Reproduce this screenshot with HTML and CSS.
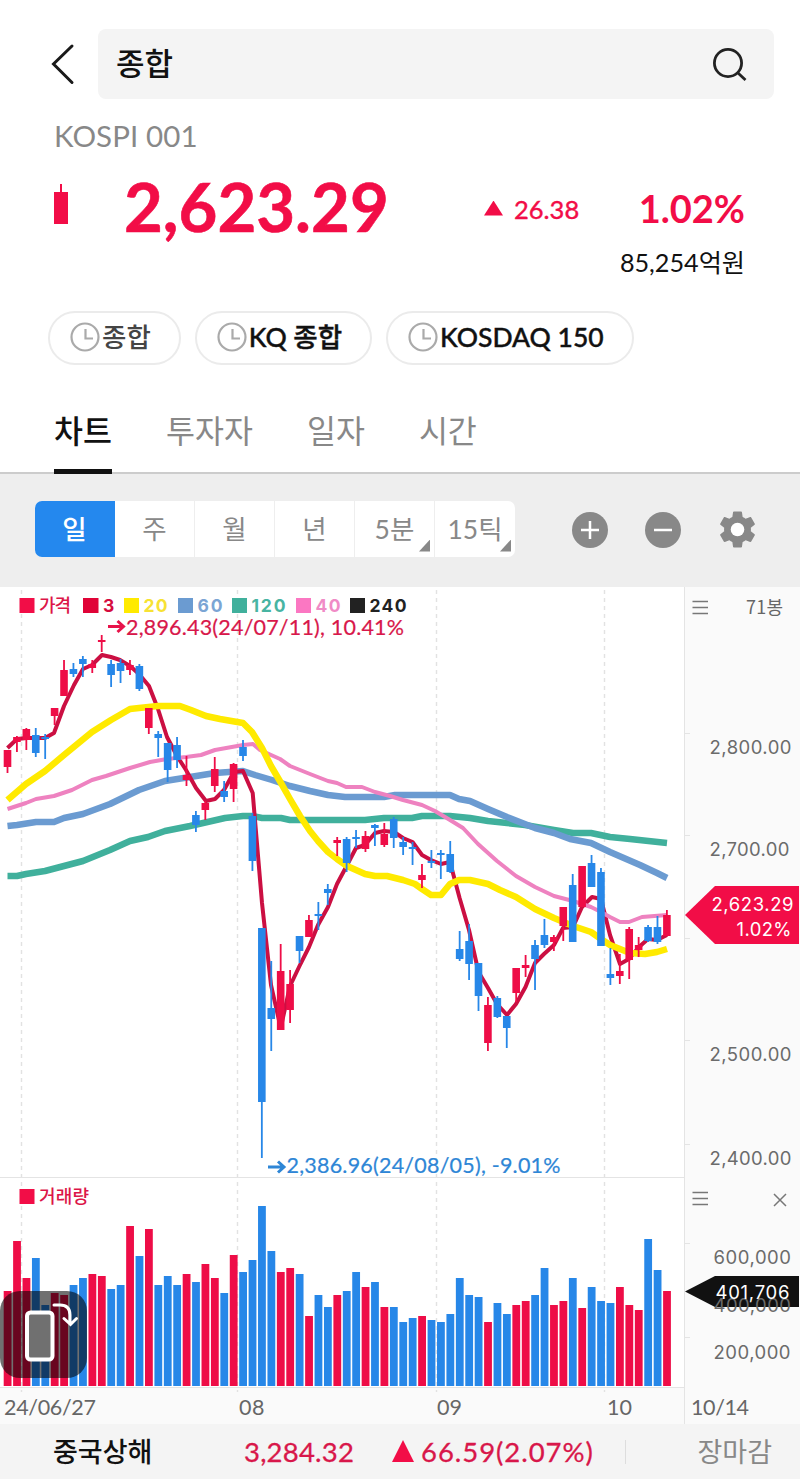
FILE: index.html
```html
<!DOCTYPE html>
<html lang="ko">

<head>
    <meta charset="UTF-8">
    <meta name="viewport" content="width=device-width, initial-scale=1.0">
    <title>종합 - KOSPI</title>
    <link rel="stylesheet" href="styles.css">
</head>

<body>

    <header class="top-bar">
        <svg class="back" width="26" height="42" viewBox="0 0 26 42">
            <path d="M22 3 3.500 21 22 39.500" />
        </svg>
        <div class="search-box">
            <span>종합</span>
            <svg width="36" height="36" viewBox="0 0 36 36">
                <circle cx="16" cy="17" r="13.600" />
                <path d="M25.500 26.500 33.500 34" />
            </svg>
        </div>
    </header>

    <section class="quote">
        <div class="quote-code">KOSPI 001</div>
        <div class="quote-row">
            <svg class="mini-candle" width="14" height="40" viewBox="0 0 14 40">
                <rect x="6" width="2" height="9" />
                <rect y="8" width="14" height="32" />
            </svg>
            <span class="price">2,623.29</span>
            <span class="diff"><i class="up"></i>26.38</span>
            <span class="rate">1.02%</span>
        </div>
        <div class="amount">85,254억원</div>
    </section>

    <div class="chips">
        <div class="chip chip-on">
            <svg width="30" height="30" viewBox="0 0 30 30"><circle cx="15" cy="15" r="13.500" /><path d="M15.500 7v9.500H23" /></svg>
            <span>종합</span>
        </div>
        <div class="chip">
            <svg width="30" height="30" viewBox="0 0 30 30"><circle cx="15" cy="15" r="13.500" /><path d="M15.500 7v9.500H23" /></svg>
            <span>KQ 종합</span>
        </div>
        <div class="chip">
            <svg width="30" height="30" viewBox="0 0 30 30"><circle cx="15" cy="15" r="13.500" /><path d="M15.500 7v9.500H23" /></svg>
            <span>KOSDAQ 150</span>
        </div>
    </div>

    <nav class="tabs">
        <a class="tab active">차트</a>
        <a class="tab">투자자</a>
        <a class="tab">일자</a>
        <a class="tab">시간</a>
    </nav>

    <div class="toolbar">
        <div class="periods">
            <div class="period selected">일</div>
            <div class="period">주</div>
            <div class="period">월</div>
            <div class="period">년</div>
            <div class="period more">5분</div>
            <div class="period more">15틱</div>
        </div>
        <div class="tools">
            <svg width="36" height="36" viewBox="0 0 36 36">
                <circle cx="18" cy="18" r="18" />
                <path d="M9 18h18M18 9v18" />
            </svg>
            <svg width="36" height="36" viewBox="0 0 36 36">
                <circle cx="18" cy="18" r="18" />
                <path d="M9 18h18" />
            </svg>
            <svg class="gear" width="43" height="43" viewBox="0 0 24 24">
                <path d="M19.430 12.980c.040-.320.070-.640.070-.980s-.030-.660-.070-.980l2.110-1.650c.190-.150.240-.420.120-.640l-2-3.460c-.120-.220-.390-.300-.610-.220l-2.490 1c-.520-.400-1.080-.730-1.690-.980l-.380-2.650C14.460 2.180 14.250 2 14 2h-4c-.250 0-.460.180-.490.420l-.380 2.650c-.610.250-1.170.590-1.690.980l-2.490-1c-.230-.090-.490 0-.610.220l-2 3.460c-.130.220-.070.490.120.640l2.110 1.650c-.040.320-.070.650-.070.980s.030.660.070.980l-2.110 1.650c-.190.150-.240.420-.120.640l2 3.460c.120.220.390.300.610.220l2.490-1c.520.400 1.080.730 1.690.980l.380 2.650c.030.240.240.420.490.420h4c.250 0 .460-.180.490-.420l.380-2.650c.610-.250 1.170-.590 1.690-.980l2.490 1c.230.090.490 0 .610-.220l2-3.460c.120-.220.070-.490-.120-.640l-2.110-1.650z" />
                <circle cx="12" cy="12" r="3.800" />
            </svg>
        </div>
    </div>

    <main class="chart-wrap">
        <svg id="chart" class="chart" width="800" height="837" viewBox="0 587 800 837">
            <!-- backgrounds and grid -->
            <rect class="axis-bg" x="684" y="587" width="116" height="837" />
            <rect class="axis-bg" x="0" y="1387" width="800" height="37" />
            <path class="grid" d="M21.500 590V1392M237.500 590V1392M436.500 590V1392M604.500 590V1392" />
            <path class="rule" d="M684.500 587V1424M0 1177.500H684M0 1387.500H684M684 733.500h6M684 835.500h6M684 938.500h6M684 1040.500h6M684 1144.500h6M684 1243.500h6M684 1337.500h6" />

            <!-- moving averages -->
            <g id="lines"></g>
            <g id="candles"></g>
            <g id="volumes"></g>

            <!-- legend -->
            <g class="legend">
                <rect x="19.500" y="598" width="15" height="15" fill="#f20d47" />
                <text class="kr" x="39" y="611.500" textLength="32" fill="#dc1548">가격</text>
                <rect x="83" y="598" width="15.500" height="15" fill="#e00337" />
                <text x="103" y="611.500" textLength="12" fill="#d50b3e">3</text>
                <rect x="124" y="598" width="15" height="15" fill="#ffea00" />
                <text x="143.500" y="611.500" textLength="24" fill="#f7e233">20</text>
                <rect x="178" y="598" width="15" height="15" fill="#6b9bd1" />
                <text x="197.500" y="611.500" textLength="25" fill="#7ba5d4">60</text>
                <rect x="232" y="598" width="15" height="15" fill="#40b09c" />
                <text x="251.500" y="611.500" textLength="34" fill="#48b4a2">120</text>
                <rect x="296" y="598" width="15" height="15" fill="#fb77c2" />
                <text x="315.500" y="611.500" textLength="25" fill="#f08bc6">40</text>
                <rect x="350" y="598" width="15" height="15" fill="#222" />
                <text x="369.500" y="611.500" textLength="37" fill="#222">240</text>
                <rect x="19.500" y="1189" width="15" height="15" fill="#f20d47" />
                <text class="kr" x="39" y="1202.500" textLength="50" fill="#dc1548">거래량</text>
            </g>

            <!-- high / low marks -->
            <path class="arrow-high" d="M108 626.500h14M117.500 621l6 5.500-6 5.500" />
            <text class="mark high" x="126" y="634.500" textLength="278">2,896.43(24/07/11), 10.41%</text>
            <path class="arrow-low" d="M268 1167h14M278 1161.500l6 5.500-6 5.500" />
            <text class="mark low" x="286.500" y="1173" textLength="274">2,386.96(24/08/05), -9.01%</text>

            <!-- price axis -->
            <path class="menu" d="M692.500 601.500h15.500M692.500 607.500h15.500M692.500 613.500h15.500" />
            <text class="count" x="746" y="614" textLength="37">71봉</text>
            <g class="axis">
                <text x="709.500" y="753.500" textLength="82">2,800.00</text>
                <text x="709.500" y="855.500" textLength="80">2,700.00</text>
                <text x="709.500" y="1060.500" textLength="82">2,500.00</text>
                <text x="709.500" y="1165" textLength="82">2,400.00</text>
            </g>
            <path class="tag-red" d="M685 915l30-29h84v58h-84z" />
            <g class="tag-text">
                <text x="711.500" y="911" textLength="82">2,623.29</text>
                <text x="736.500" y="936" textLength="55">1.02%</text>
            </g>

            <!-- volume axis -->
            <path class="menu" d="M692.500 1192.500h15.500M692.500 1198.500h15.500M692.500 1204.500h15.500M774 1194l12 12M786 1194l-12 12" />
            <path class="tag-black" d="M685 1291.500l30-15.500h84v31h-84z" />
            <g class="axis">
                <text x="713.500" y="1263.500" textLength="77.500">600,000</text>
                <text x="713.500" y="1311.500" textLength="77.500">400,000</text>
                <text x="713.500" y="1358.500" textLength="77">200,000</text>
            </g>
            <text class="tag-text" x="715.500" y="1298.500" textLength="74">401,706</text>

            <!-- dates -->
            <g class="dates">
                <text x="4" y="1415" textLength="92">24/06/27</text>
                <text x="239" y="1415" textLength="25.500">08</text>
                <text x="437" y="1415" textLength="25">09</text>
                <text x="607" y="1415" textLength="25">10</text>
                <text x="691" y="1415" textLength="58">10/14</text>
            </g>
        </svg>

        <button class="rotate" type="button">
            <svg width="87" height="87" viewBox="0 0 87 87">
                <rect x="27" y="21.500" width="25.500" height="47" rx="3.500" />
                <path d="M54 14h6q10 0 10 10v9M64 27.500l6.500 6 6-6" />
            </svg>
        </button>
    </main>

    <footer class="ticker">
        <span class="ticker-name">중국상해</span>
        <span class="ticker-price">3,284.32</span>
        <span class="ticker-diff"><i class="up"></i>66.59(2.07%)</span>
        <span class="ticker-state">장마감</span>
    </footer>

    <script src="chart.js"></script>

</body>

</html>
```
FILE: styles.css
```css
body {
    font-family: Lato, "Noto Sans CJK KR", sans-serif;
    background-color: #fff;
    color: #111;
    margin: 0;
    width: 800px;
}

svg {
    display: block;
}

/* search */
.top-bar {
    display: flex;
    align-items: center;
    padding: 29px 26px 0 50px;
}

.back {
    margin-right: 22px;
    fill: none;
    stroke: #1a1a1a;
    stroke-width: 3;
    stroke-linecap: round;
}

.search-box {
    flex: 1;
    display: flex;
    align-items: center;
    justify-content: space-between;
    box-sizing: border-box;
    height: 70px;
    padding: 0 26px 0 18px;
    background-color: #f4f4f4;
    border-radius: 8px;
    font-family: "Noto Sans CJK KR", sans-serif;
    font-size: 31px;
    font-weight: 500;
}

.search-box span {
    line-height: 66px;
    padding-bottom: 4px;
}

.search-box svg {
    fill: none;
    stroke: #222;
    stroke-width: 2.8;
}

/* quote */
.quote {
    padding: 0 55px 0 54px;
    height: 212px;
}

.quote-code {
    padding-top: 17px;
    line-height: 40px;
    font-size: 29.5px;
    letter-spacing: .1px;
    color: #888;
}

.quote-row {
    display: flex;
    align-items: center;
    height: 96px;
    color: #f20d47;
}

.mini-candle {
    fill: #f20d47;
}

.price {
    width: 360px;
    margin-left: 56px;
    padding-top: 4px;
    font-size: 67px;
    font-weight: 700;
    line-height: 92px;
    -webkit-text-stroke: .6px #f20d47;
}

.up {
    display: inline-block;
    width: 19px;
    height: 15px;
    margin-right: 11px;
    background-color: #f20d47;
    clip-path: polygon(50% 0, 100% 100%, 0 100%);
}

.diff {
    flex: 1;
    padding-top: 9px;
    font-size: 25.5px;
    -webkit-text-stroke: .4px #f20d47;
}

.diff .up {
    position: relative;
    top: -3px;
}

.rate {
    padding-top: 8px;
    font-size: 38px;
    font-weight: 700;
}

.amount {
    margin-top: -7px;
    line-height: 34px;
    font-size: 25.2px;
    text-align: right;
}

/* recent items */
.chips {
    display: flex;
    gap: 14px;
    padding-left: 48px;
}

.chip {
    display: flex;
    align-items: center;
    box-sizing: border-box;
    height: 54px;
    padding: 0 28px 0 20px;
    border: 2px solid #ebebeb;
    border-radius: 27px;
    font-size: 26.5px;
    font-weight: 500;
    white-space: nowrap;
}

.chip span {
    margin-left: 2px;
    padding-bottom: 2px;
    line-height: 46px;
    -webkit-text-stroke: .4px #111;
}

.chip.chip-on span {
    color: #444;
    -webkit-text-stroke: 0;
}

.chip svg {
    margin-top: -2px;
    fill: none;
    stroke: #aaa;
    stroke-width: 2.2;
}

/* tabs */
.tabs {
    display: flex;
    gap: 54px;
    height: 80px;
    margin-top: 27px;
    padding-left: 54px;
    border-bottom: 2px solid #ccc;
    font-family: "Noto Sans CJK KR", sans-serif;
}

.tab {
    height: 77px;
    border-bottom: 5px solid transparent;
    font-size: 31.5px;
    line-height: 75px;
    color: #888;
}

.tab.active {
    color: #111;
    font-weight: 500;
    border-color: #111;
}

/* chart toolbar */
.toolbar {
    display: flex;
    align-items: center;
    justify-content: space-between;
    box-sizing: border-box;
    height: 113px;
    padding: 0 43px 2px 35px;
    background-color: #eee;
}

.periods {
    display: flex;
    height: 56px;
    margin-top: -2px;
    border-radius: 7px;
    overflow: hidden;
    background-color: #fff;
}

.period {
    position: relative;
    box-sizing: border-box;
    width: 80px;
    border-right: 1px solid #eee;
    font-size: 26.5px;
    line-height: 57px;
    text-align: center;
    color: #888;
}

.period:last-child {
    border-right: 0;
}

.selected {
    background-color: #2488ee;
    border-color: #2488ee;
    color: #fff;
    font-weight: 500;
}

.more::after {
    content: "";
    position: absolute;
    right: 4px;
    bottom: 5px;
    width: 11px;
    height: 12px;
    background-color: #888;
    clip-path: polygon(100% 0, 100% 100%, 0 100%);
}

.tools {
    display: flex;
    align-items: center;
    gap: 37px;
    fill: #888;
}

.tools path {
    stroke: #fff;
    stroke-width: 2.5;
}

.tools .gear {
    margin: 0 -2px 0 -2px;
}

.gear path {
    stroke: none;
}

.gear circle {
    fill: #fff;
}

/* chart */
.chart-wrap {
    position: relative;
    height: 837px;
}

.axis-bg {
    fill: #fafafa;
}

.grid {
    stroke: #e2e2e2;
    stroke-width: 1.4;
    stroke-dasharray: 4 4;
}

.rule {
    stroke: #e4e4e4;
    fill: none;
}

.legend text {
    font: 700 17.5px Inter, sans-serif;
}

.legend .kr {
    font: 500 18px "Noto Sans CJK KR", sans-serif;
}

.mark {
    font: 21.5px Lato, sans-serif;
    stroke-width: .2;
}

.high {
    fill: #d8174a;
    stroke: #d8174a;
}

.low {
    fill: #2e86d6;
    stroke: #2e86d6;
}

.arrow-high,
.arrow-low {
    fill: none;
    stroke: #e8134a;
    stroke-width: 3;
}

.arrow-low {
    stroke: #2e86d6;
}

.menu {
    stroke: #777;
    stroke-width: 1.5;
}

.count {
    font: 18px "Noto Sans CJK KR", sans-serif;
    fill: #666;
}

.axis text {
    font: 18.5px Inter, sans-serif;
    fill: #6b6b6b;
}

.tag-red {
    fill: #f20d47;
}

.tag-black {
    fill: #111;
}

.tag-text {
    font: 18.5px Inter, sans-serif;
    fill: #fff;
}

.dates {
    font: 21.5px Lato, sans-serif;
    fill: #666;
}

.rotate {
    position: absolute;
    left: 0;
    top: 704px;
    width: 87px;
    height: 87px;
    padding: 0;
    border: 0;
    border-radius: 20px;
    background-color: rgba(0, 0, 0, .56);
}

.rotate svg {
    fill: none;
    stroke: #fff;
    stroke-width: 3;
    stroke-linecap: round;
}

.rotate rect {
    fill: #707070;
    stroke-width: 4;
}

/* bottom ticker */
.ticker {
    display: flex;
    align-items: center;
    height: 55px;
    padding: 0 28px 0 53px;
    background-color: #f4f4f4;
    font-size: 27px;
    line-height: 55px;
}

.ticker-name {
    width: 191px;
    font-weight: 500;
}

.ticker-price,
.ticker-diff {
    font-size: 27.5px;
    color: #d8174a;
    letter-spacing: .2px;
    -webkit-text-stroke: .3px #d8174a;
}

.ticker-price {
    width: 148px;
}

.ticker-diff {
    letter-spacing: .95px;
}

.ticker-diff .up {
    width: 22px;
    height: 22px;
    margin-right: 7px;
}

.ticker-state {
    margin-left: auto;
    padding-left: 71px;
    color: #888;
    line-height: 24px;
    border-left: 1px solid #ddd;
}
```
FILE: chart.js
```js
// color, wick top, body top, body bottom, wick bottom, volume top
const bars = [
    ['r', 750, 750, 767, 773, 1291], ['r', 736, 737, 742, 752, 1241], ['r', 728, 729, 740, 750, 1278],
    ['b', 728, 735, 753, 757, 1258], ['b', 734, 737, 739, 759, 1305], ['r', 708, 708, 716, 725, 1293],
    ['r', 660, 670, 696, 696, 1295], ['b', 663, 669, 674, 677, 1285], ['b', 656, 659, 664, 677, 1278],
    ['r', 660, 664, 668, 673, 1274], ['r', 635, 640, 642, 652, 1276], ['b', 660, 664, 675, 687, 1289],
    ['b', 659, 663, 671, 683, 1285], ['r', 660, 665, 670, 675, 1226], ['b', 664, 666, 689, 691, 1256],
    ['r', 708, 708, 728, 734, 1229], ['b', 731, 734, 738, 757, 1285], ['b', 743, 743, 770, 782, 1276],
    ['b', 737, 745, 760, 768, 1285], ['r', 756, 775, 780, 786, 1274], ['b', 811, 815, 825, 832, 1282],
    ['r', 801, 803, 810, 820, 1264], ['r', 757, 769, 786, 792, 1278], ['b', 781, 791, 797, 802, 1293],
    ['r', 763, 764, 789, 802, 1255], ['b', 740, 747, 756, 761, 1272], ['b', 813, 816, 861, 871, 1260],
    ['b', 928, 928, 1102, 1158, 1206], ['b', 961, 1008, 1019, 1051, 1251], ['r', 944, 971, 1030, 1030, 1272],
    ['r', 970, 984, 1010, 1023, 1268], ['b', 936, 936, 951, 963, 1274], ['r', 915, 920, 937, 937, 1316],
    ['b', 902, 914, 916, 930, 1295], ['b', 884, 889, 893, 905, 1307], ['r', 837, 840, 843, 856, 1295],
    ['b', 837, 839, 863, 872, 1291], ['b', 830, 837, 839, 848, 1272], ['r', 831, 836, 849, 852, 1287],
    ['b', 824, 825, 828, 846, 1282], ['r', 823, 834, 845, 847, 1307], ['b', 817, 819, 838, 848, 1307],
    ['b', 837, 842, 847, 855, 1322], ['b', 842, 847, 849, 865, 1318], ['r', 864, 875, 880, 888, 1316],
    ['b', 850, 861, 863, 868, 1320], ['b', 850, 853, 855, 879, 1322], ['b', 841, 854, 872, 873, 1314],
    ['b', 931, 949, 959, 961, 1278], ['b', 924, 941, 964, 980, 1295], ['b', 963, 963, 996, 1011, 1297],
    ['r', 997, 1005, 1043, 1051, 1322], ['b', 996, 998, 1017, 1018, 1303], ['b', 1016, 1016, 1028, 1048, 1314],
    ['r', 968, 968, 993, 1002, 1305], ['r', 955, 965, 968, 977, 1301], ['b', 940, 945, 959, 990, 1295],
    ['b', 919, 935, 945, 948, 1268], ['r', 935, 937, 942, 951, 1305], ['r', 907, 907, 926, 941, 1301],
    ['b', 874, 885, 942, 942, 1278], ['r', 866, 866, 907, 907, 1308], ['b', 855, 863, 887, 887, 1287],
    ['b', 868, 872, 946, 946, 1301], ['b', 948, 974, 978, 985, 1303], ['r', 954, 971, 976, 984, 1287],
    ['r', 927, 929, 960, 979, 1305], ['r', 937, 945, 950, 957, 1310], ['b', 925, 927, 941, 942, 1239],
    ['b', 916, 927, 942, 944, 1270], ['r', 910, 915, 936, 936, 1291]
];

const colors = { r: '#ee0d47', b: '#2787e8' };

const lines = [
    // 120
    ['#40b09c', 6.5, '7.5,876 17,876 26,874 45,871 64,866 83,861 110,850 130,841 148,837 165,831 190,826 225,818 243,816 253,816 262,818 281,818 290,820 365,820 384,818 412,818 422,816 450,816 470,818 488,821 507,823 525,825 554,830 573,833 591,833 610,837 630,839 667,843'],
    // 60
    ['#6b9bd1', 6.5, '7.5,826 17,825 36,822 54,822 64,818 83,814 110,804 139,790 165,781 190,777 215,773 243,771 255,775 272,780 290,786 310,791 328,795 345,797 384,797 395,795 450,795 459,799 470,801 488,809 507,817 535,828 554,833 570,839 591,843 610,852 640,865 657,873 667,878'],
    // 3
    ['#cb0f42', 4, '7.5,748 17,739 27,738 36,738 45,738 54,733 64,706 74,685 83,669 92,665 102,655 111,657 120,660 130,666 139,674 149,686 158,709 167,737 177,756 186,770 196,788 206,801 215,799 224,790 234,772 243,771 252.7,793 262,903 271,985 280.7,1028 290,986 299.5,966 309,947 318,925 328,907 337,884 346.6,866 356,848 365,845 375,833 384,831 394,832 403,838 412.5,842 422,855 431,860 441,864 450,862 459.6,898 469,930 478.5,972 488,988 497,1004 507,1015 516,1004 525.5,987 535,963 544,954 554,945 563,928 573,927 582,907 592,897 601,899 610,935 620,964 629,959 639,947 648,939 657,940 667,935'],
    // 40
    ['#ee82c0', 4, '7.5,809 26,803 36,799 54,796 72,790 92,780 106,776 130,768 150,762 167,759 186,757 201,755 215,750 243,745 253,744 260,750 280,759 290,766 310,774 328,781 337,783 346,787 362,787 375,792 390,796 403,800 422,805 435,811 450,820 463,828 478,844 497,861 516,876 535,887 554,896 573,901 591,907 601,912 610,917 620,922 629,922 642,917 667,915'],
    // 20
    ['#ffea00', 6.5, '7.5,800 26,784 45,771 64,755 92,732 111,720 130,709 139,708 158,706 180,706 191,710 206,716 220,719 243,723 252,732 262,748 271,766 281,783 290,799 300,816 310,831 318,841 328,852 337,859 347,866 365,874 375,876 387,876 403,880 415,884 422,889 431,895 441,895 450,884 459,880 470,880 488,884 500,890 516,897 535,909 554,918 573,926 591,932 601,939 610,945 620,949 630,953 645,954 657,952 667,949']
];

function rect(x, y, w, h, fill) {
    return `<rect x="${x}" y="${y}" width="${w}" height="${h}" fill="${fill}"/>`;
}

let candles = '';
let volumes = '';
bars.forEach(([c, high, top, bottom, low, vol], i) => {
    const x = 7.5 + i * 9.42;
    candles += rect(x - 0.9, high, 1.8, low - high, colors[c]);
    candles += rect(x - 3.8, top, 7.6, bottom - top, colors[c]);
    volumes += rect(x - 3.8, vol, 7.8, 1386 - vol, colors[c]);
});

document.getElementById('candles').innerHTML = candles;
document.getElementById('volumes').innerHTML = volumes;
document.getElementById('lines').innerHTML = lines.map(([color, width, points]) =>
    `<polyline points="${points}" fill="none" stroke="${color}" stroke-width="${width}" stroke-linejoin="round"/>`
).join('');
```
